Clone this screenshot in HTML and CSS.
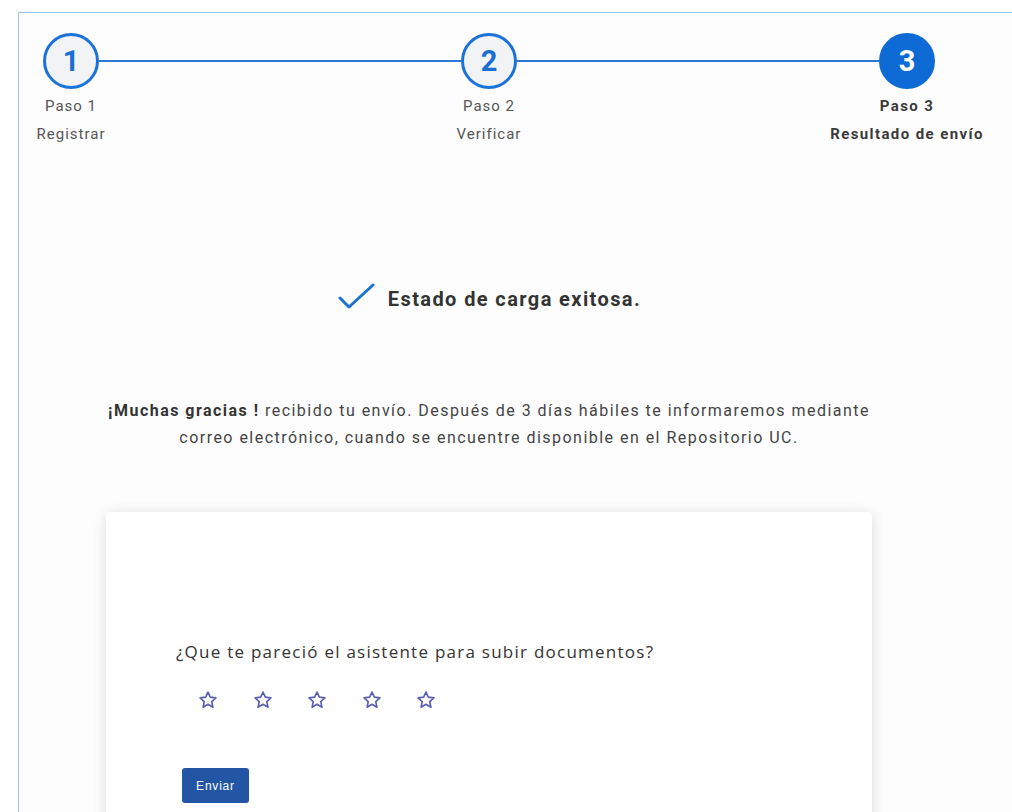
FILE: index.html
```html
<!DOCTYPE html>
<html lang="es">
<head>
<meta charset="utf-8">
<title>Resultado de envío</title>
<link rel="stylesheet" href="styles.css">
</head>
<body>
<div class="frame">
  <div class="content">
    <ol class="stepper">
      <li class="step">
        <span class="step-circle">1</span>
        <span class="step-label">Paso 1<br>Registrar</span>
      </li>
      <li class="connector" aria-hidden="true"></li>
      <li class="step">
        <span class="step-circle">2</span>
        <span class="step-label">Paso 2<br>Verificar</span>
      </li>
      <li class="connector" aria-hidden="true"></li>
      <li class="step step-active">
        <span class="step-circle">3</span>
        <span class="step-label">Paso 3<br>Resultado de envío</span>
      </li>
    </ol>

    <div class="result">
      <svg class="result-check" width="38" height="32" viewBox="0 0 38 32" aria-hidden="true">
        <polyline points="3,15 12,24 36,2" fill="none" stroke="#1c72d3" stroke-width="3" stroke-linecap="round" stroke-linejoin="round"/>
      </svg>
      <h2 class="result-title">Estado de carga exitosa.</h2>
    </div>

    <p class="thanks"><strong>¡Muchas gracias !</strong> recibido tu envío. Después de 3 días hábiles te informaremos mediante correo electrónico, cuando se encuentre disponible en el Repositorio UC.</p>

    <section class="survey">
      <p class="survey-question">¿Que te pareció el asistente para subir documentos?</p>
      <div class="stars">
        <svg class="star" viewBox="0 0 24 24" aria-hidden="true"><polygon points="12,2.5 14.8,8.6 21.5,9.4 16.5,13.9 17.9,20.6 12,17.2 6.1,20.6 7.5,13.9 2.5,9.4 9.2,8.6"/></svg>
        <svg class="star" viewBox="0 0 24 24" aria-hidden="true"><polygon points="12,2.5 14.8,8.6 21.5,9.4 16.5,13.9 17.9,20.6 12,17.2 6.1,20.6 7.5,13.9 2.5,9.4 9.2,8.6"/></svg>
        <svg class="star" viewBox="0 0 24 24" aria-hidden="true"><polygon points="12,2.5 14.8,8.6 21.5,9.4 16.5,13.9 17.9,20.6 12,17.2 6.1,20.6 7.5,13.9 2.5,9.4 9.2,8.6"/></svg>
        <svg class="star" viewBox="0 0 24 24" aria-hidden="true"><polygon points="12,2.5 14.8,8.6 21.5,9.4 16.5,13.9 17.9,20.6 12,17.2 6.1,20.6 7.5,13.9 2.5,9.4 9.2,8.6"/></svg>
        <svg class="star" viewBox="0 0 24 24" aria-hidden="true"><polygon points="12,2.5 14.8,8.6 21.5,9.4 16.5,13.9 17.9,20.6 12,17.2 6.1,20.6 7.5,13.9 2.5,9.4 9.2,8.6"/></svg>
      </div>
      <button class="btn-send" type="button">Enviar</button>
    </section>
  </div>
</div>
</body>
</html>
```

FILE: styles.css
```css
html, body {
  margin: 0;
  padding: 0;
  background: #ffffff;
}

body {
  font-family: Roboto, "Liberation Sans", sans-serif;
  color: #333;
  overflow: hidden;
}

.frame {
  margin: 12px 0 0 18px;
  border-top: 1px solid #9fc3ec;
  border-left: 1px solid #9fc3ec;
  background: #fdfdfd;
  min-height: 820px;
}

.content {
  width: 940px;
}

/* ---- stepper ---- */
.stepper {
  list-style: none;
  margin: 0;
  box-sizing: border-box;
  width: 916px;
  padding: 20px 0 0 24px;
  display: flex;
  align-items: flex-start;
}

.step {
  width: 56px;
  display: flex;
  flex-direction: column;
  align-items: center;
}

.step-circle {
  box-sizing: border-box;
  width: 56px;
  height: 56px;
  border-radius: 50%;
  border: 3.5px solid #1b72d8;
  background: #f2f3f5;
  color: #1b6fd4;
  font-weight: 700;
  font-size: 29px;
  display: flex;
  align-items: center;
  justify-content: center;
}

.step-label {
  margin-top: 3px;
  font-size: 15px;
  line-height: 28px;
  letter-spacing: 1px;
  color: #555;
  white-space: nowrap;
  text-align: center;
}

.step-active .step-circle {
  background: #0e6bd6;
  border-color: #0e6bd6;
  color: #fff;
}

.step-active .step-label {
  font-weight: 700;
  letter-spacing: 1.4px;
  color: #3a3a3a;
}

.connector {
  flex: 1;
  height: 1.5px;
  margin-top: 27px;
  background: #2b79d4;
}

/* ---- result ---- */
.result {
  margin-top: 133px;
  display: flex;
  align-items: center;
  justify-content: center;
  gap: 13px;
  height: 36px;
}

.result-title {
  margin: 0;
  font-size: 20px;
  font-weight: 700;
  letter-spacing: 1.4px;
  color: #333;
  line-height: 36px;
}

.thanks {
  margin: 80px auto 0;
  max-width: 790px;
  text-align: center;
  font-size: 16px;
  line-height: 27px;
  letter-spacing: 1.47px;
  color: #444;
}

.thanks strong {
  color: #333;
}

/* ---- survey card ---- */
.survey {
  width: 766px;
  box-sizing: border-box;
  margin: 61px auto 0;
  padding: 128px 70px 60px;
  background: #fff;
  border-radius: 4px;
  box-shadow: 0 2px 14px rgba(0, 0, 0, 0.14);
}

.survey-question {
  margin: 0;
  font-family: "Open Sans", sans-serif;
  font-size: 17px;
  line-height: 24px;
  letter-spacing: 1.25px;
  color: #333;
}

.stars {
  margin-top: 24px;
  padding-left: 22px;
  display: flex;
  gap: 34.5px;
  height: 24px;
  align-items: center;
}

.star {
  width: 20px;
  height: 20px;
  fill: none;
  stroke: #5b5fb3;
  stroke-width: 2;
  stroke-linejoin: round;
}

.btn-send {
  display: block;
  margin: 56px 0 0 6px;
  width: 67px;
  height: 35px;
  border: none;
  border-radius: 3px;
  background: #2255a4;
  color: #fff;
  font-family: "Liberation Sans", Arial, sans-serif;
  font-size: 12px;
  letter-spacing: 0.8px;
  cursor: pointer;
}
```
